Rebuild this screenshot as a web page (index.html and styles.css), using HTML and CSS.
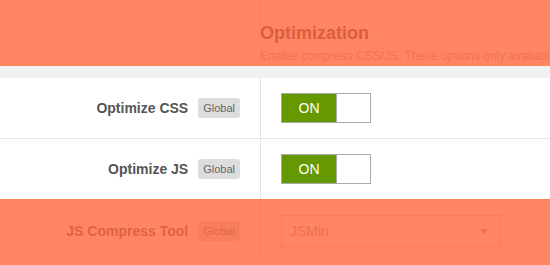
FILE: index.html
```html
<!DOCTYPE html>
<html lang="en">
<head>
    <meta charset="UTF-8">
    <title>Optimization Settings</title>
    <link rel="stylesheet" href="styles.css">
</head>
<body>
    <div class="settings">
        <!-- end of previous row -->
        <div class="row row-prev">
            <div class="label-cell"></div>
            <div class="field-cell"></div>
        </div>

        <!-- Section heading -->
        <div class="section-head">
            <h3>Optimization</h3>
            <p>Enable compress CSS/JS. These options only available when Developer Mode is off.</p>
        </div>

        <!-- Highlighted rows -->
        <div class="highlight">
            <div class="band"></div>
            <div class="row">
                <div class="label-cell">
                    <label>Optimize CSS</label>
                    <span class="badge">Global</span>
                </div>
                <div class="field-cell">
                    <div class="toggle"><span class="toggle-on">ON</span></div>
                </div>
            </div>
            <div class="row">
                <div class="label-cell">
                    <label>Optimize JS</label>
                    <span class="badge">Global</span>
                </div>
                <div class="field-cell">
                    <div class="toggle"><span class="toggle-on">ON</span></div>
                </div>
            </div>
        </div>

        <div class="row row-last">
            <div class="label-cell">
                <label>JS Compress Tool</label>
                <span class="badge">Global</span>
            </div>
            <div class="field-cell">
                <div class="select">
                    <span>JSMin</span>
                    <span class="caret"></span>
                </div>
            </div>
        </div>
    </div>
</body>
</html>
```

FILE: styles.css
```css
/* General Styles */
html, body {
    margin: 0;
    padding: 0;
    overflow: hidden;
}

body {
    font-family: 'Liberation Sans', Arial, sans-serif;
    background: #fff;
    color: #555;
    width: 550px;
    height: 265px;
}

.settings {
    position: relative;
}

.row {
    display: grid;
    grid-template-columns: 261px 1fr;
}

.row + .row {
    border-top: 1px solid #e5e5e5;
}

.row-prev {
    height: 5px;
}

.row-last {
    border-top: 1px solid #e5e5e5;
    border-bottom: 1px solid #e5e5e5;
}

.label-cell {
    border-right: 1px solid #e5e5e5;
    display: flex;
    justify-content: flex-end;
    align-items: center;
    gap: 10px;
    padding: 0 20px;
}

.label-cell label {
    font-size: 14px;
    font-weight: bold;
    color: #555;
}

.badge {
    display: inline-block;
    height: 20px;
    line-height: 20px;
    padding: 0 5px;
    font-size: 11px;
    color: #666;
    background: #ddd;
    border-radius: 3px;
}

.field-cell {
    padding: 15px 20px;
}

/* Section heading */
.section-head {
    padding: 16px 0 1px 260px;
    white-space: nowrap;
    overflow: hidden;
}

.section-head h3 {
    margin: 0;
    font-size: 18px;
    line-height: 24px;
    color: #444;
}

.section-head p {
    margin: 3px 0 0;
    font-size: 12px;
    line-height: 17px;
    color: #aaa;
}

.band {
    height: 12px;
    background: #f1f1f1;
}

/* Toggle */
.toggle {
    width: 88px;
    height: 28px;
    border: 1px solid #aaa;
    background: #fff;
    display: flex;
}

.toggle-on {
    width: 54px;
    border-right: 1px solid #aaa;
    background: #669900;
    color: #fff;
    font-size: 14px;
    line-height: 28px;
    text-align: center;
}

/* Select */
.select {
    width: 198px;
    height: 30px;
    border: 1px solid #ccc;
    display: flex;
    align-items: center;
    justify-content: space-between;
    padding: 0 12px 0 8px;
    font-size: 14px;
    color: #999;
}

.caret {
    width: 0;
    height: 0;
    border-left: 4px solid transparent;
    border-right: 4px solid transparent;
    border-top: 5px solid #999;
}

/* Tour highlight: dim everything else */
.highlight {
    position: relative;
}

.highlight::after {
    content: "";
    position: absolute;
    inset: 0;
    box-shadow: 0 0 0 2000px rgba(255, 102, 60, 0.8);
    pointer-events: none;
    z-index: 10;
}
```
